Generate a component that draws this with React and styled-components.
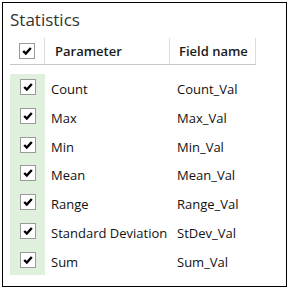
import React from "react"
import styled, { createGlobalStyle } from "styled-components"

const GlobalStyle = createGlobalStyle`
  body {
    margin: 0;
    background: #ffffff;
    font-family: "Open Sans", "Noto Sans", sans-serif;
  }
`

const Page = styled.div`
  width: 290px;
  height: 290px;
  padding: 2px 3px 3px 2px;
  box-sizing: border-box;
`

const Panel = styled.div`
  width: 285px;
  height: 285px;
  box-sizing: border-box;
  border: 1px solid #000;
  padding: 5px 0 0 7px;
`

const Title = styled.h1`
  margin: 0;
  font-size: 17px;
  font-weight: 400;
  line-height: 24px;
  color: #333;
`

const Table = styled.div`
  margin-top: 6px;
  display: grid;
  grid-template-columns: 35px 125px 86px;
  width: 246px;
`

const HeadCell = styled.div`
  height: 26px;
  display: flex;
  align-items: center;
  border-bottom: 1px solid #c6c6c6;
  border-right: 1px solid #dcdcdc;
  justify-content: ${p => (p.$center ? "center" : "flex-start")};
  padding-left: ${p => p.$pad || 0}px;
  font-size: 13px;
  font-weight: 600;
  color: #1a1a1a;
`

const Spacer = styled.div`
  grid-column: 1 / -1;
  height: 9px;
`

const CheckCell = styled.div`
  height: 28.75px;
  background: #dff0dc;
  display: flex;
  justify-content: center;
  padding-top: 5px;
  box-sizing: border-box;
`

const TextCell = styled.div`
  height: 28.75px;
  box-sizing: border-box;
  padding-top: 6px;
  padding-left: ${p => p.$pad}px;
  font-size: 13px;
  line-height: 18px;
  color: #111;
  white-space: nowrap;
`

const Box = styled.div`
  width: 16px;
  height: 16px;
  box-sizing: border-box;
  border: 1px solid #9a9a9a;
  background: #fff;
  display: flex;
  align-items: center;
  justify-content: center;
`

const Check = () => (
  <Box>
    <svg width="12" height="12" viewBox="0 0 12 12">
      <path d="M2.2 6 L4.8 8.6 L9.8 3" fill="none" stroke="#000" strokeWidth="2.4" />
    </svg>
  </Box>
)

const rows = [
  ["Count", "Count_Val"],
  ["Max", "Max_Val"],
  ["Min", "Min_Val"],
  ["Mean", "Mean_Val"],
  ["Range", "Range_Val"],
  ["Standard Deviation", "StDev_Val"],
  ["Sum", "Sum_Val"],
]

export default function App() {
  return (
    <Page>
      <GlobalStyle />
      <Panel>
        <Title>Statistics</Title>
        <Table>
          <HeadCell $center>
            <Check />
          </HeadCell>
          <HeadCell $pad={10}>Parameter</HeadCell>
          <HeadCell $pad={9}>Field name</HeadCell>
          <Spacer />
          {rows.map(([name, field]) => (
            <React.Fragment key={name}>
              <CheckCell>
                <Check />
              </CheckCell>
              <TextCell $pad={6}>{name}</TextCell>
              <TextCell $pad={7}>{field}</TextCell>
            </React.Fragment>
          ))}
        </Table>
      </Panel>
    </Page>
  )
}
